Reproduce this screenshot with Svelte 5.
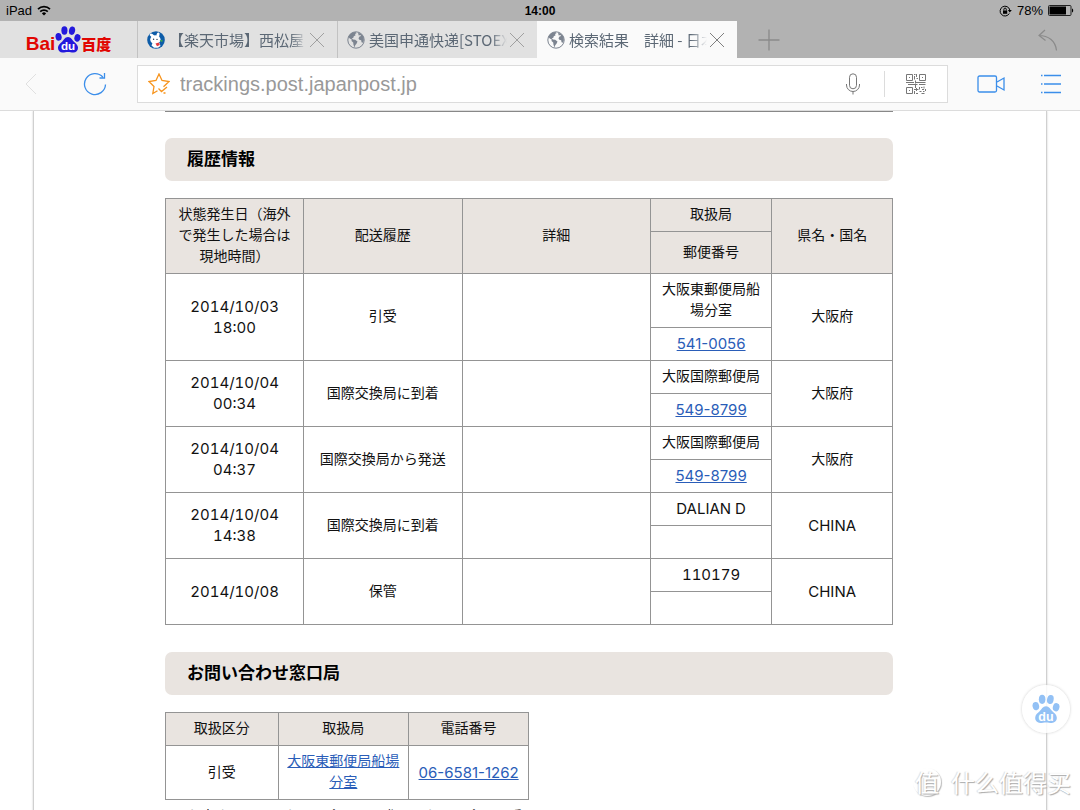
<script>
    const tabs = [
        { title: '【楽天市場】西松屋', icon: 'panda', active: false },
        { title: '美国申通快递[STOEX', icon: 'globe', active: false },
        { title: '検索結果　詳細 - 日本', icon: 'globe', active: true }
    ];

    const history = [
        { date: '2014/10/03', time: '18:00', status: '引受', office: '大阪東郵便局船場分室', zip: '541-0056', area: '大阪府' },
        { date: '2014/10/04', time: '00:34', status: '国際交換局に到着', office: '大阪国際郵便局', zip: '549-8799', area: '大阪府' },
        { date: '2014/10/04', time: '04:37', status: '国際交換局から発送', office: '大阪国際郵便局', zip: '549-8799', area: '大阪府' },
        { date: '2014/10/04', time: '14:38', status: '国際交換局に到着', office: 'DALIAN D', zip: '', area: 'CHINA' },
        { date: '2014/10/08', time: '', status: '保管', office: '110179', zip: '', area: 'CHINA' }
    ];

    let url = 'trackings.post.japanpost.jp';

    // Latin text is set a little larger than the Japanese text
    const isLatin = (text) => /^[\x20-\x7e]+$/.test(text);
</script>

{#snippet paw()}
    <ellipse cx="4" cy="12" rx="3.4" ry="4.3" transform="rotate(-12 4 12)" />
    <ellipse cx="10.5" cy="5" rx="3.4" ry="4.7" />
    <ellipse cx="19" cy="5.2" rx="3.4" ry="4.7" transform="rotate(12 19 5.2)" />
    <ellipse cx="25" cy="13.2" rx="3.4" ry="4.3" transform="rotate(14 25 13.2)" />
    <path d="M14.5 12.2c3.4 0 4.7 3.4 6.6 5.2 2.2 2 4.6 3.6 4.6 6.7 0 3.4-2.4 5.3-5.2 5.3-2.3 0-3.6-.5-6-.5s-3.7.5-6 .5c-2.8 0-5.2-1.9-5.2-5.3 0-3.1 2.4-4.7 4.6-6.7 1.9-1.8 3.2-5.2 6.6-5.2z" />
{/snippet}

<div class="browser">
    <header>
        <div class="status-bar">
            <span class="status-left">
                iPad
                <svg width="14" height="11" viewBox="0 0 14 11" fill="none" stroke="#000" stroke-width="1.7">
                    <path d="M1 4.2a8.5 8.5 0 0 1 12 0M3.2 6.7a5.4 5.4 0 0 1 7.6 0" />
                    <path d="M7 10.6 4.9 8.4a3 3 0 0 1 4.2 0z" fill="#000" stroke="none" />
                </svg>
            </span>
            <span class="clock">14:00</span>
            <span class="status-right">
                <svg width="13" height="12" viewBox="0 0 13 12" fill="none" stroke="#000">
                    <path d="M10.3 8.5A4.9 4.9 0 1 1 10.8 5" />
                    <path d="M8.8 5h4l-2 2.6z" fill="#000" stroke="none" />
                    <path d="M4 5.5h4.2v3.3H4z" fill="#000" stroke="none" />
                    <path d="M4.9 5.5V4.3a1.2 1.2 0 0 1 2.4 0v1.2" />
                </svg>
                78%
                <svg width="26" height="11" viewBox="0 0 26 11">
                    <rect x=".5" y=".5" width="22.5" height="10" rx="1" fill="none" stroke="#222" />
                    <rect x="1.5" y="1.5" width="16.5" height="8" fill="#000" />
                    <path d="M24 3.5c1.6.4 1.6 3.6 0 4z" fill="#000" />
                </svg>
            </span>
        </div>

        <nav class="tab-bar">
            <a class="logo" href="#home" aria-label="Bai du 百度">
                <span>Bai</span>
                <svg width="26" height="27" viewBox="0 0 29 30" fill="#2319dc">
                    {@render paw()}
                    <text x="14.5" y="27" text-anchor="middle" class="du">du</text>
                </svg>
                <span class="logo-cn">百度</span>
            </a>
            {#each tabs as tab}
                <div class="tab" class:active={tab.active}>
                    {#if tab.icon === 'panda'}
                        <svg width="18" height="18" viewBox="0 0 18 18">
                            <circle cx="9" cy="9" r="8.8" fill="#0d5ca8" />
                            <ellipse cx="5" cy="4.6" rx="2.6" ry="1.5" transform="rotate(35 5 4.6)" fill="#fff" />
                            <ellipse cx="11" cy="3.8" rx="1.5" ry="2.4" transform="rotate(15 11 3.8)" fill="#fff" />
                            <ellipse cx="8.4" cy="8.6" rx="5.2" ry="4.4" fill="#fff" />
                            <path d="M5.5 12h7l1 3-2.5 1.8H7L4.5 14.5z" fill="#fff" />
                            <circle cx="6.6" cy="8.2" r=".7" fill="#253b55" />
                            <circle cx="10" cy="8.4" r=".7" fill="#253b55" />
                            <path d="M8.5 12.5 12 11.5l.8 2.5-2.8 1.3z" fill="#e23a3f" />
                            <path d="m12.5 9.5 3-.8-.2 2.6z" fill="#39a94a" />
                        </svg>
                    {:else}
                        <svg width="18" height="18" viewBox="0 0 18 18" fill="#7c8490">
                            <circle cx="9" cy="9" r="8.2" fill="none" stroke="#7c8490" />
                            <path d="M2 4.5C3.5 2 6 1 8.5 1l1 1.3-1.5.7.6 1.3-1.8.9-.6 1.7-1.5.3L6 8.5l2.2.3 2.3 1.7-1 2.2-1.3 1.5-.4 2.3-1.3-2.6-.3-2.4-1.7-1.6.2-1.4-1.9-.9L1.2 6z" />
                            <path d="M11 1.5c2.5.7 4.6 2.2 5.6 4.7l.3 3.1-1.1 2.5-1.3-.6-.3-2-1.9-.4-.8-1.6 1-1.7 1.5-.4-.6-1-1.7.4-.3-1.3z" />
                        </svg>
                    {/if}
                    <span class="tab-title">{tab.title}</span>
                    <button class="close" aria-label="Close tab">
                        <svg width="16" height="16" viewBox="0 0 16 16" stroke="currentColor">
                            <path d="M1 1l14 14M15 1L1 15" />
                        </svg>
                    </button>
                </div>
            {/each}
            <button class="new-tab" aria-label="New tab">
                <svg width="22" height="22" viewBox="0 0 22 22" stroke="#8a8a8a" stroke-width="1.3">
                    <path d="M11 .5v21M.5 11h21" />
                </svg>
            </button>
            <button class="undo" aria-label="Reopen tab">
                <svg width="20" height="22" viewBox="0 0 20 22" fill="none" stroke="#8a8a8a" stroke-width="1.2">
                    <path d="M7 1 1 6.5l6.5 5M1 6.5c9 0 16.5 5 17.5 15" />
                </svg>
            </button>
        </nav>

        <div class="toolbar">
            <button class="back" aria-label="Back">
                <svg width="12" height="22" viewBox="0 0 12 22" fill="none" stroke="#e0e0e0">
                    <path d="M11 1 1 11l10 10" />
                </svg>
            </button>
            <button class="reload" aria-label="Reload">
                <svg width="24" height="24" viewBox="0 0 24 24" fill="none" stroke="#3b8eea" stroke-width="1.3">
                    <path d="M22.5 12.5A10.5 10.5 0 1 1 19.8 5M21.5 1v5h-5" />
                </svg>
            </button>
            <div class="address">
                <svg width="22" height="22" viewBox="0 0 22 22" fill="none" stroke="#f7941d" stroke-width="1.3">
                    <path d="M15.5 13.8 21 8.5l-7-1L11 1 8 7.5l-7 1 5 5L4.8 20.5l4.7-2.7M10.5 15.5l3 3 5.5-4.5M15.5 20h2" />
                </svg>
                <input type="text" aria-label="Address" bind:value={url} />
                <button class="mic" aria-label="Voice search">
                    <svg width="16" height="22" viewBox="0 0 16 22" fill="none" stroke="#777">
                        <rect x="4.5" y=".8" width="7" height="15" rx="3.5" />
                        <path d="M1.5 11v1a6.5 6.5 0 0 0 13 0v-1M8 18.5v3" />
                    </svg>
                </button>
                <button class="qr" aria-label="Scan code">
                    <svg width="20" height="20" viewBox="0 0 20 20" fill="none" stroke="#777">
                        <path d="M.5.5h6v6h-6zM13.5.5h6v6h-6zM.5 13.5h6v6h-6z" />
                        <path d="M3 3.5h1M16 3.5h1M3 16.5h1M8 .5h1.5M10.5 0v3M8.5 2v3.5M10.5 4.5H12M9.5 6.5v3M0 8.5h8M9 8.5h10.5M2 10.5h9.5M13 10.5h6.5M9.5 11v3M8 15.5h4.5M10.5 14v3M8.5 17v3M10 19.5h2M13.5 13v2.5M15 13.5h1.5M18 12.5v2M16 15.5h2M19.5 15v2M13.5 17.5h2M17 17.5h1.5M15.5 19.5h3" />
                    </svg>
                </button>
            </div>
            <button class="video" aria-label="Video">
                <svg width="28" height="18" viewBox="0 0 28 18" fill="none" stroke="#3b8eea" stroke-width="1.3">
                    <rect x="1" y="1" width="18.5" height="16" rx="1.5" />
                    <path d="m20 7 7-4v12l-7-4" />
                </svg>
            </button>
            <button class="menu" aria-label="Menu">
                <svg width="22" height="20" viewBox="0 0 22 20" stroke="#3b8eea" stroke-width="1.3">
                    <path d="M1 1.5h1.5M4 1.5h17M1 10h1.5M4 10h17M1 18.5h1.5M4 18.5h17" />
                </svg>
            </button>
        </div>
    </header>

    <div class="viewport">
        <main>
            <hr />
            <h2>履歴情報</h2>
            <table class="history">
                <colgroup>
                    <col class="when" /><col class="status" /><col class="detail" /><col class="office" /><col />
                </colgroup>
                <thead>
                    <tr>
                        <th rowspan="2">状態発生日（海外で発生した場合は現地時間）</th>
                        <th rowspan="2">配送履歴</th>
                        <th rowspan="2">詳細</th>
                        <th>取扱局</th>
                        <th rowspan="2">県名・国名</th>
                    </tr>
                    <tr class="zip-head"><th>郵便番号</th></tr>
                </thead>
                <tbody>
                    {#each history as row}
                        <tr>
                            <td rowspan="2" class="latin">{row.date}{#if row.time}<br />{row.time}{/if}</td>
                            <td rowspan="2">{row.status}</td>
                            <td rowspan="2"></td>
                            <td class:latin={isLatin(row.office)}>{row.office}</td>
                            <td rowspan="2" class:latin={isLatin(row.area)}>{row.area}</td>
                        </tr>
                        <tr>
                            <td class="latin">
                                {#if row.zip}<a href="#{row.zip}">{row.zip}</a>{/if}
                            </td>
                        </tr>
                    {/each}
                </tbody>
            </table>

            <h2>お問い合わせ窓口局</h2>
            <table class="contact">
                <colgroup>
                    <col class="kind" /><col class="branch" /><col />
                </colgroup>
                <thead>
                    <tr><th>取扱区分</th><th>取扱局</th><th>電話番号</th></tr>
                </thead>
                <tbody>
                    <tr>
                        <td>引受</td>
                        <td><a href="#office">大阪東郵便局船場分室</a></td>
                        <td class="latin"><a href="tel:0665811262">06-6581-1262</a></td>
                    </tr>
                </tbody>
            </table>
            <p class="note">お客さまからのお問い合わせの際は、お問い合わせ番号</p>
        </main>
    </div>

    <button class="paw-button" aria-label="Baidu">
        <svg width="28" height="30" viewBox="0 0 29 30" fill="#93c1f5">
            {@render paw()}
            <text x="14.5" y="27" text-anchor="middle" class="du">du</text>
        </svg>
    </button>
    <div class="watermark">
        <span class="seal">值</span>
        <span>什么值得买</span>
    </div>
</div>

<style>
    :global(body) {
        margin: 0;
    }

    .browser {
        position: relative;
        display: flex;
        flex-direction: column;
        height: 100vh;
        overflow: hidden;
        background: #fff;
        color: #111;
        font-family: Inter, "Noto Sans CJK JP", sans-serif;
    }

    svg {
        display: block;
        flex: none;
    }

    button {
        display: flex;
        align-items: center;
        justify-content: center;
        padding: 0;
        border: none;
        background: none;
        cursor: pointer;
    }

    .status-bar {
        display: grid;
        grid-template-columns: 1fr auto 1fr;
        align-items: center;
        height: 21px;
        padding: 0 6px;
        background: #b2b2b2;
        color: #000;
        font: 13px "Liberation Sans", sans-serif;
    }

    .status-left,
    .status-right {
        display: flex;
        align-items: center;
        gap: 5px;
    }

    .status-right {
        justify-content: flex-end;
    }

    .clock {
        font-size: 12px;
        font-weight: bold;
    }

    .tab-bar {
        display: flex;
        height: 37px;
        background: #b2b2b2;
    }

    .logo {
        display: flex;
        align-items: flex-end;
        justify-content: center;
        box-sizing: border-box;
        width: 137px;
        padding-bottom: 5px;
        background: #e1e1e1;
        color: #e10602;
        font: bold 19px/18px "Liberation Sans", sans-serif;
        text-decoration: none;
    }

    .logo-cn {
        font: 900 15px/18px "Noto Sans CJK SC", sans-serif;
    }

    .du {
        fill: #fff;
        font: bold 13px "Liberation Sans", sans-serif;
    }

    .tab {
        display: flex;
        align-items: center;
        box-sizing: border-box;
        width: 200px;
        padding: 0 12px 0 9px;
        border-left: 1px solid #c2c2c2;
        background: #e1e1e1;
    }

    .tab.active {
        border-color: #fafafa;
        background: #fafafa;
    }

    .tab-title {
        flex: 1;
        margin: 0 2px 0 4px;
        overflow: hidden;
        color: #5c6875;
        font: 15px/22px "Noto Sans CJK JP", sans-serif;
        white-space: nowrap;
        mask-image: linear-gradient(to right, #000 88%, transparent);
    }

    .close {
        color: #a0a0a0;
    }

    .active .close {
        color: #808080;
    }

    .new-tab {
        width: 64px;
    }

    .undo {
        margin-left: auto;
        margin-right: 22px;
    }

    .toolbar {
        display: flex;
        align-items: center;
        height: 52px;
        border-bottom: 1px solid #dcdcdc;
        background: #fafafa;
    }

    .back {
        width: 62px;
    }

    .reload {
        width: 66px;
        margin-right: 9px;
    }

    .address {
        display: flex;
        flex: 1;
        align-items: center;
        height: 36px;
        padding-left: 10px;
        border: 1px solid #dcdcdc;
        background: #fff;
    }

    input {
        flex: 1;
        min-width: 0;
        padding: 0;
        margin-left: 10px;
        border: none;
        outline: none;
        background: none;
        color: #999;
        font: 20px "Liberation Sans", sans-serif;
    }

    .mic {
        width: 63px;
        height: 26px;
        border-right: 1px solid #dcdcdc;
    }

    .qr {
        width: 62px;
    }

    .video {
        width: 86px;
    }

    .menu {
        width: 34px;
        margin-right: 12px;
    }

    .viewport {
        flex: 1;
        min-height: 0;
        overflow: hidden;
    }

    main {
        min-height: 100%;
        margin: 0 33px;
        padding: 0 153px 0 131px;
        border-left: 1px solid #d0d0d0;
        border-right: 1px solid #d0d0d0;
        box-shadow: 0 0 2px #ccc;
    }

    hr {
        height: 1px;
        margin: 0 0 26px;
        border: none;
        background: #888;
    }

    h2 {
        margin: 0 0 17px;
        padding: 0 22px;
        border-radius: 7px;
        background: #e9e4e0;
        color: #000;
        font-size: 17px;
        font-weight: bold;
        line-height: 43px;
    }

    table {
        border-collapse: collapse;
        table-layout: fixed;
        width: 100%;
        margin-bottom: 27px;
        font-size: 14px;
        line-height: 21px;
    }

    th,
    td {
        height: 21px;
        padding: 4px 8px 7px;
        border: 1px solid #949494;
        font-weight: normal;
        text-align: center;
    }

    th {
        background: #e9e4e0;
    }

    .zip-head th {
        height: 29px;
    }

    .latin {
        padding: 5px 8px 6px;
        font-size: 15px;
        font-variant-numeric: tabular-nums;
    }

    .when {
        width: 19%;
    }

    .status {
        width: 21.8%;
    }

    .detail {
        width: 25.9%;
    }

    .office {
        width: 16.7%;
    }

    .contact {
        width: 50%;
        margin-bottom: 5px;
    }

    .kind {
        width: 31%;
    }

    .branch {
        width: 36%;
    }

    a {
        color: #2a5db8;
        font-variant-numeric: normal;
    }

    .note {
        margin: 0;
        padding-left: 22px;
        font-size: 14px;
        line-height: 21px;
    }

    .paw-button {
        position: absolute;
        right: 10px;
        bottom: 77px;
        width: 48px;
        height: 48px;
        border-radius: 50%;
        background: rgba(255, 255, 255, 0.85);
        box-shadow: 0 0 3px #ccc;
    }

    .watermark {
        position: absolute;
        right: 9px;
        bottom: 12px;
        display: flex;
        align-items: center;
        gap: 10px;
        color: #fff;
        font: 24px/32px "Noto Sans CJK SC", sans-serif;
        text-shadow: 1px 1px 1px #aaa, -1px 0 1px #ddd;
    }

    .seal {
        width: 28px;
        height: 28px;
        border-radius: 50%;
        box-shadow: 1px 1px 1px #bbb;
        line-height: 28px;
        text-align: center;
    }
</style>
